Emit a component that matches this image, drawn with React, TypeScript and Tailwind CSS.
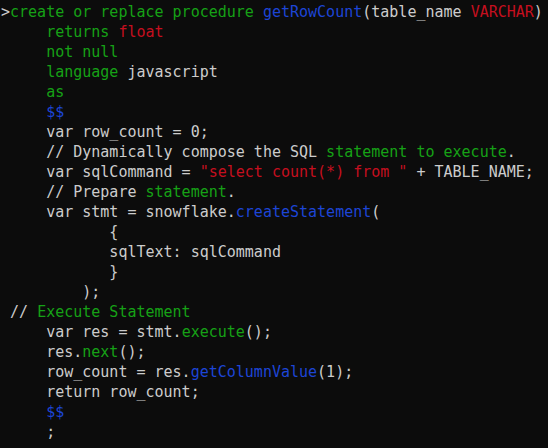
import React from "react"

type Seg = [string, string?]

const G = "text-[#16a116]"
const R = "text-[#c50f1f]"
const B = "text-[#1d45d6]"

const lines: Seg[][] = [
      [[">"], ["create or replace procedure ", G], ["getRowCount", B], ["(table_name "], ["VARCHAR", R], [")"]],
      [["     "], ["returns ", G], ["float", R]],
      [["     "], ["not null", G]],
      [["     "], ["language ", G], ["javascript"]],
      [["     "], ["as", G]],
      [["     "], ["$$", B]],
      [["     var row_count = 0;"]],
      [["     // Dynamically compose the SQL "], ["statement to execute", G], ["."]],
      [["     var sqlCommand = "], ["\"select count(*) from \"", R], [" + TABLE_NAME;"]],
      [["     // Prepare "], ["statement", G], ["."]],
      [["     var stmt = snowflake."], ["createStatement", B], ["("]],
      [["            {"]],
      [["            sqlText: sqlCommand"]],
      [["            }"]],
      [["         );"]],
      [[" // "], ["Execute Statement", G]],
      [["     var res = stmt."], ["execute", G], ["();"]],
      [["     res."], ["next", G], ["();"]],
      [["     row_count = res."], ["getColumnValue", B], ["(1);"]],
      [["     return row_count;"]],
      [["     "], ["$$", B]],
      [["     ;"]],
]

export default function App() {
      return (
            <div className="w-[548px] h-[448px] bg-[#0c0c0c] text-[#cccccc] pt-[2px] pl-[1px] overflow-hidden font-['DejaVu_Sans_Mono',monospace] text-[15px]">
                  {lines.map((line, i) => (
                        <div key={i} className="h-5 leading-5 whitespace-pre">
                              {line.map(([text, cls], j) => (
                                    <span key={j} className={cls}>{text}</span>
                              ))}
                        </div>
                  ))}
            </div>
      )
}
